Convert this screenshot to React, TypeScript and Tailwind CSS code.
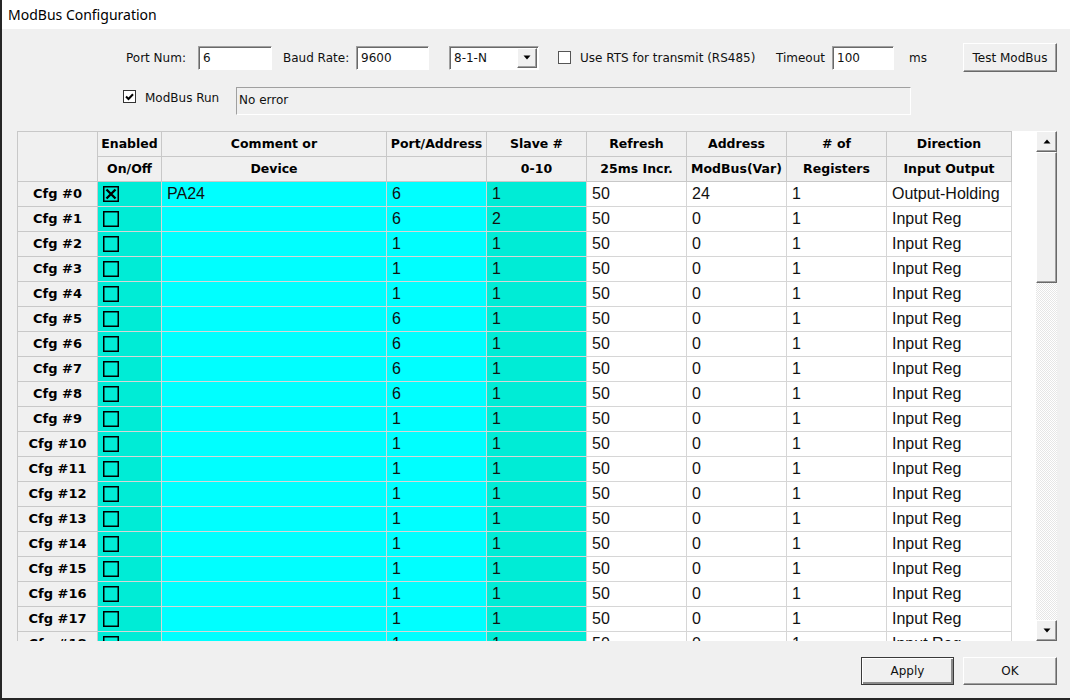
import React from 'react'

const CYAN = 'bg-[#00ffff]'
const TEAL = 'bg-[#00ecd6]'
const GRID = 'grid grid-cols-[80px_64px_225px_100px_100px_100px_100px_100px_125px]'

type Row = { comment: string; port: string; slave: string; refresh: string; addr: string; regs: string; dir: string; on: boolean }

const rows: Row[] = Array.from({ length: 19 }, (_, i) => {
  const port = i <= 1 || (i >= 5 && i <= 8) ? '6' : '1'
  return {
    comment: i === 0 ? 'PA24' : '',
    port,
    slave: i === 1 ? '2' : '1',
    refresh: '50',
    addr: i === 0 ? '24' : '0',
    regs: '1',
    dir: i === 0 ? 'Output-Holding' : 'Input Reg',
    on: i === 0,
  }
})

const raised =
  'border border-t-white border-l-white border-r-[#696969] border-b-[#696969] shadow-[inset_-1px_-1px_#a0a0a0] bg-[#f0f0f0]'
const sunken =
  'border border-t-[#a0a0a0] border-l-[#a0a0a0] border-r-white border-b-white shadow-[inset_1px_1px_#696969] bg-white'

function TextBox({ value, className }: { value: string; className: string }) {
  return (
    <div className={`${sunken} h-[24px] flex items-center pl-[4px] ${className}`}>
      <span>{value}</span>
    </div>
  )
}

function CheckMark() {
  return (
    <svg width="9" height="8" viewBox="0 0 9 8">
      <path d="M1 3.5 L3.5 6 L8 1.2" stroke="#000" strokeWidth="2" fill="none" />
    </svg>
  )
}

function SmallCheck({ checked, className = '' }: { checked: boolean; className?: string }) {
  return (
    <div className={`w-[13px] h-[13px] border border-[#333] bg-white flex items-center justify-center ${className}`}>
      {checked && <CheckMark />}
    </div>
  )
}

function GridCheck({ checked }: { checked: boolean }) {
  return (
    <svg width="16" height="16" viewBox="0 0 16 16">
      <rect x="0.75" y="0.75" width="14.5" height="14.5" stroke="#000" strokeWidth="1.5" fill="none" />
      {checked && (
        <path d="M3.5 3.5 L12.5 12.5 M12.5 3.5 L3.5 12.5" stroke="#000" strokeWidth="2.4" />
      )}
    </svg>
  )
}

function Arrow({ down }: { down?: boolean }) {
  return (
    <svg width="8" height="5" viewBox="0 0 8 5">
      <path d={down ? 'M0.5 0.5 H7.5 L4 4.5 Z' : 'M0.5 4.5 H7.5 L4 0.5 Z'} fill="#000" />
    </svg>
  )
}

function Button({ label, className = '' }: { label: string; className?: string }) {
  return (
    <div className={`${raised} flex items-center justify-center ${className}`}>
      <span>{label}</span>
    </div>
  )
}

const hdr = 'border-r border-b border-[#c8c8c8] bg-[#f0f0f0] flex items-center justify-center font-bold text-[12.5px] text-black'
const cell = 'border-r border-b border-[#d6d6d6] flex items-center pl-[5px]'

export default function App() {
  return (
    <div className="w-[1070px] h-[700px] bg-[#f0f0f0] border-l-2 border-[#262626] flex flex-col overflow-hidden font-['DejaVu_Sans',sans-serif] text-[12px] text-[#111]">
      {/* title */}
      <div className="h-[29px] bg-white flex items-center pl-[6px] font-['Noto_Sans',sans-serif] text-[14px] text-black shrink-0">
        ModBus Configuration
      </div>

      {/* settings row */}
      <div className="mt-[14px] h-[29px] flex items-center pl-[124px] shrink-0">
        <span className="w-[72px]">Port Num:</span>
        <TextBox value="6" className="w-[74px]" />
        <span className="ml-[11px] w-[73px]">Baud Rate:</span>
        <TextBox value="9600" className="w-[73px]" />
        <div className={`${sunken} ml-[20px] w-[90px] h-[24px] flex items-center`}>
          <span className="pl-[4px] flex-1">8-1-N</span>
          <div className={`${raised} w-[20px] h-[20px] mr-[1px] flex items-center justify-center`}>
            <Arrow down />
          </div>
        </div>
        <SmallCheck checked={false} className="ml-[19px] border-[#555]" />
        <span className="ml-[9px] w-[196px]">Use RTS for transmit (RS485)</span>
        <span className="w-[56px]">Timeout</span>
        <TextBox value="100" className="w-[62px]" />
        <span className="ml-[15px] w-[54px]">ms</span>
        <Button label="Test ModBus" className="w-[94px] h-[29px]" />
      </div>

      {/* status row */}
      <div className="mt-[15px] h-[28px] flex items-start pl-[121px] shrink-0">
        <SmallCheck checked className="mt-[3px]" />
        <span className="ml-[9px] w-[91px] mt-[2px]">ModBus Run</span>
        <div className="w-[675px] h-[28px] border border-t-[#a0a0a0] border-l-[#a0a0a0] border-r-white border-b-white pl-[2px] pt-[3px]">
          No error
        </div>
      </div>

      {/* grid */}
      <div className="mt-[16px] ml-[15px] h-[510px] flex shrink-0 overflow-hidden">
        <div className="w-[995px] border-l border-t border-[#c8c8c8] overflow-hidden">
          <div className={GRID}>
            <div className={`${hdr} row-span-2`} />
            <div className={`${hdr} h-[25px]`}>Enabled</div>
            <div className={`${hdr} h-[25px]`}>Comment or</div>
            <div className={`${hdr} h-[25px]`}>Port/Address</div>
            <div className={`${hdr} h-[25px]`}>Slave #</div>
            <div className={`${hdr} h-[25px]`}>Refresh</div>
            <div className={`${hdr} h-[25px]`}>Address</div>
            <div className={`${hdr} h-[25px]`}># of</div>
            <div className={`${hdr} h-[25px]`}>Direction</div>
            <div className={`${hdr} h-[25px]`}>On/Off</div>
            <div className={`${hdr} h-[25px]`}>Device</div>
            <div className={`${hdr} h-[25px]`} />
            <div className={`${hdr} h-[25px]`}>0-10</div>
            <div className={`${hdr} h-[25px]`}>25ms Incr.</div>
            <div className={`${hdr} h-[25px]`}>ModBus(Var)</div>
            <div className={`${hdr} h-[25px]`}>Registers</div>
            <div className={`${hdr} h-[25px]`}>Input Output</div>
          </div>
          {rows.map((r, i) => (
            <div key={i} className={`${GRID} h-[25px] font-['Liberation_Sans',sans-serif] text-[16px] text-[#111]`}>
              <div className={`${hdr} font-['DejaVu_Sans',sans-serif] text-[13px]`}>Cfg #{i}</div>
              <div className={`${cell} ${TEAL}`}>
                <GridCheck checked={r.on} />
              </div>
              <div className={`${cell} ${CYAN}`}>{r.comment}</div>
              <div className={`${cell} ${CYAN}`}>{r.port}</div>
              <div className={`${cell} ${TEAL}`}>{r.slave}</div>
              <div className={`${cell} bg-white`}>{r.refresh}</div>
              <div className={`${cell} bg-white`}>{r.addr}</div>
              <div className={`${cell} bg-white`}>{r.regs}</div>
              <div className={`${cell} bg-white`}>{r.dir}</div>
            </div>
          ))}
        </div>
        <div className="w-[24px] bg-white" />
        <div className="w-[21px] flex flex-col bg-[repeating-conic-gradient(#e6e6e6_0%_25%,#ffffff_0%_50%)] bg-[length:2px_2px]">
          <div className={`${raised} h-[21px] flex items-center justify-center`}>
            <Arrow />
          </div>
          <div className={`${raised} h-[131px]`} />
          <div className="flex-1" />
          <div className={`${raised} h-[21px] flex items-center justify-center`}>
            <Arrow down />
          </div>
        </div>
      </div>

      {/* buttons */}
      <div className="mt-[16px] h-[28px] flex pl-[859px] gap-[9px] shrink-0">
        <div className="w-[93px] h-[28px] border border-[#3a3a3a] shadow-[inset_1px_1px_#fff,inset_-2px_-2px_#8a8a8a] bg-[#f0f0f0] flex items-center justify-center">
          Apply
        </div>
        <Button label="OK" className="w-[94px] h-[28px]" />
      </div>

      <div className="flex-1" />
      <div className="h-[2px] bg-[#262626] shrink-0" />
    </div>
  )
}
